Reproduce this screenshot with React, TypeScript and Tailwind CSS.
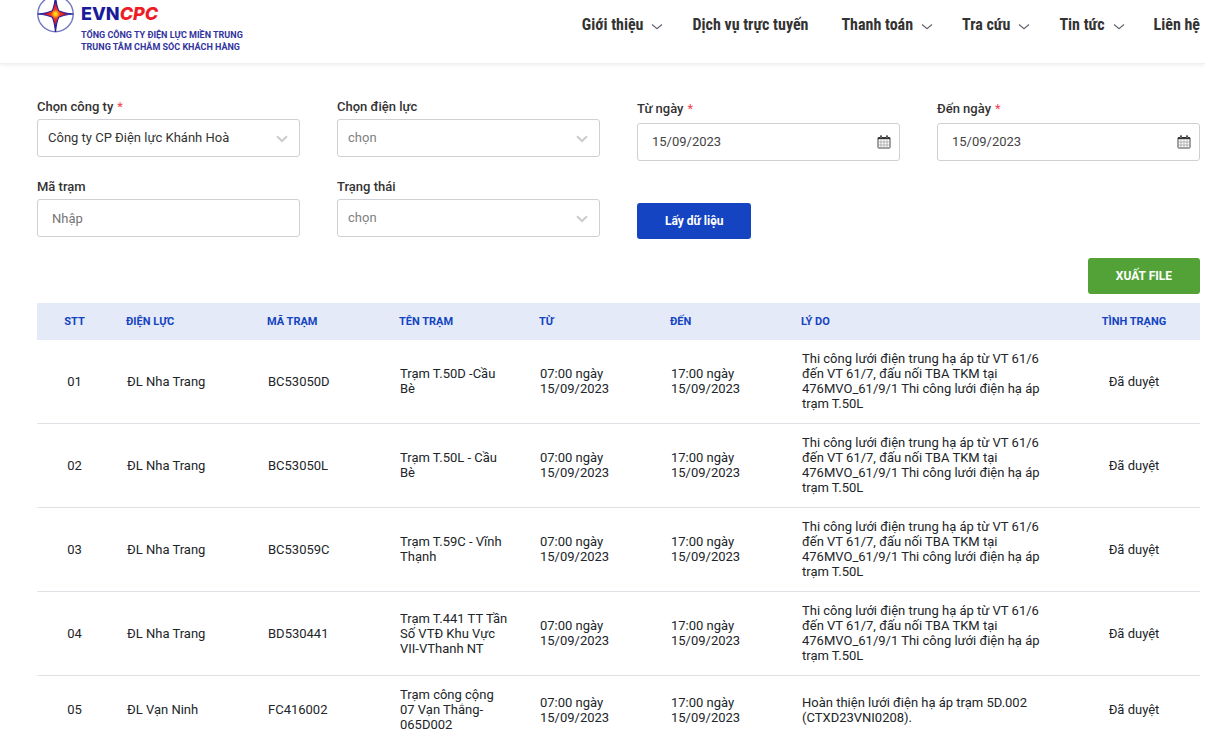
import type { ReactNode } from 'react';

const navItems = [
  { label: 'Giới thiệu', hasMenu: true },
  { label: 'Dịch vụ trực tuyến', hasMenu: false },
  { label: 'Thanh toán', hasMenu: true },
  { label: 'Tra cứu', hasMenu: true },
  { label: 'Tin tức', hasMenu: true },
  { label: 'Liên hệ', hasMenu: false },
];

const longReason =
  'Thi công lưới điện trung hạ áp từ VT 61/6 đến VT 61/7, đấu nối TBA TKM tại 476MVO_61/9/1 Thi công lưới điện hạ áp trạm T.50L';

const rows = [
  { stt: '01', unit: 'ĐL Nha Trang', code: 'BC53050D', name: 'Trạm T.50D -Cầu Bè', reason: longReason },
  { stt: '02', unit: 'ĐL Nha Trang', code: 'BC53050L', name: 'Trạm T.50L - Cầu Bè', reason: longReason },
  { stt: '03', unit: 'ĐL Nha Trang', code: 'BC53059C', name: 'Trạm T.59C - Vĩnh Thạnh', reason: longReason },
  { stt: '04', unit: 'ĐL Nha Trang', code: 'BD530441', name: 'Trạm T.441 TT Tần Số VTĐ Khu Vực VII-VThanh NT', reason: longReason },
  { stt: '05', unit: 'ĐL Vạn Ninh', code: 'FC416002', name: 'Trạm công cộng 07 Vạn Thắng-065D002', reason: 'Hoàn thiện lưới điện hạ áp trạm 5D.002 (CTXD23VNI0208).' },
];

export default function App() {
  return (
    <div className="w-full bg-white font-['Roboto',sans-serif] text-[13px] text-[#212529]">
      <Header />
      <main className="pt-[31px] pr-[5px] pl-[37px]">
        <form className="grid grid-cols-4 items-start gap-x-[37px] gap-y-3.5" onSubmit={(e) => e.preventDefault()}>
          <Field id="company" label="Chọn công ty" required>
            <SelectBox id="company" options={['Công ty CP Điện lực Khánh Hoà']} className="text-[#333]" />
          </Field>
          <Field id="unit" label="Chọn điện lực">
            <SelectBox id="unit" options={['chọn']} className="text-[#808080]" />
          </Field>
          <div className="pt-0.5">
            <DateField id="from" label="Từ ngày" />
          </div>
          <div className="pt-0.5">
            <DateField id="to" label="Đến ngày" />
          </div>
          <Field id="station" label="Mã trạm">
            <input
              id="station"
              type="text"
              placeholder="Nhập"
              className="h-[38px] w-full rounded-[3px] border border-[#ced0d4] px-3.5 placeholder:text-[#757575]"
            />
          </Field>
          <Field id="status" label="Trạng thái">
            <SelectBox id="status" options={['chọn']} className="text-[#808080]" />
          </Field>
          <div className="pt-7">
            <button type="submit" className="h-9 rounded-[3px] bg-[#1444c1] px-7 text-[12px] font-bold text-white">
              Lấy dữ liệu
            </button>
          </div>
        </form>

        <div className="mt-[19px] mb-[9px] flex justify-end">
          <button type="button" className="h-9 rounded-[3px] bg-[#53a238] px-7 text-[12px] font-bold text-white">
            XUẤT FILE
          </button>
        </div>

        <OutageTable />
      </main>
    </div>
  );
}

function Header() {
  return (
    <header className="flex h-16 items-start justify-between border-b border-[#f0f0f0] pr-[5px] pl-[37px] shadow-[0_1px_4px_rgba(0,0,0,0.08)]">
      <a href="#" className="flex text-[#1a1b9b]">
        <LogoMark />
        <span className="ml-[7px] flex flex-col pt-1">
          <span className="font-['Inter',sans-serif] text-[18px] leading-5 font-extrabold">
            EVN<i className="text-[#ee1c25]">CPC</i>
          </span>
          <span className="mt-[5px] text-[9px] leading-3 font-bold whitespace-nowrap text-[#33349f]">
            TỔNG CÔNG TY ĐIỆN LỰC MIỀN TRUNG
            <br />
            TRUNG TÂM CHĂM SÓC KHÁCH HÀNG
          </span>
        </span>
      </a>
      <nav className="flex gap-[33px] pt-[13px] font-['Roboto_Condensed','Liberation_Sans_Narrow',sans-serif] text-[16px] leading-6 font-bold text-[#333]">
        {navItems.map((item) => (
          <a key={item.label} href="#" className="flex items-center whitespace-nowrap">
            {item.label}
            {item.hasMenu && (
              <svg viewBox="0 0 12 8" className="mt-1 -mr-1 ml-2 h-2 w-3" fill="none" stroke="#666674" strokeWidth="1.2">
                <path d="M1 1.5 L6 5.8 L11 1.5" />
              </svg>
            )}
          </a>
        ))}
      </nav>
    </header>
  );
}

function LogoMark() {
  return (
    <svg viewBox="0 -5 37 38" className="-mt-[5px] h-[38px] w-[37px]">
      <defs>
        <radialGradient id="star" gradientUnits="userSpaceOnUse" cx="18.5" cy="14" r="17">
          <stop offset="0" stopColor="#fff200" />
          <stop offset="0.1" stopColor="#ffc21c" />
          <stop offset="0.26" stopColor="#f03a20" />
          <stop offset="0.5" stopColor="#d01a30" />
          <stop offset="0.75" stopColor="#26209a" />
        </radialGradient>
      </defs>
      <circle cx="18.5" cy="14" r="17.7" fill="#fff" stroke="#7476bd" strokeWidth="1.4" />
      <path
        d="M18.5 -4 Q19.6 6.5 21.8 10.7 Q26 12.9 36.5 14 Q26 15.1 21.8 17.3 Q19.6 21.5 18.5 32 Q17.4 21.5 15.2 17.3 Q11 15.1 .5 14 Q11 12.9 15.2 10.7 Q17.4 6.5 18.5 -4 Z"
        fill="url(#star)"
        stroke="#28219a"
        strokeWidth="1.1"
      />
    </svg>
  );
}

type FieldProps = { id: string; label: string; required?: boolean; children: ReactNode };

function Field({ id, label, required, children }: FieldProps) {
  return (
    <div>
      <label htmlFor={id} className="mt-0.5 mb-0.5 block leading-5 font-medium text-[#333]">
        {label}
        {required && <span className="ml-1 font-normal text-[#f0424d]">*</span>}
      </label>
      {children}
    </div>
  );
}

function SelectBox({ id, options, className }: { id: string; options: string[]; className: string }) {
  return (
    <div className="relative">
      <select id={id} className={`h-[38px] w-full appearance-none rounded-[3px] border border-[#ced0d4] bg-white px-2.5 ${className}`}>
        {options.map((option) => (
          <option key={option}>{option}</option>
        ))}
      </select>
      <svg
        viewBox="0 0 12 8"
        className="pointer-events-none absolute top-4 right-3 h-2 w-3"
        fill="none"
        stroke="#ccc"
        strokeWidth="2"
      >
        <path d="M1 1.2 L6 6 L11 1.2" />
      </svg>
    </div>
  );
}

function DateField({ id, label }: { id: string; label: string }) {
  return (
    <div>
      <label htmlFor={id} className="mt-0.5 mb-1 block leading-5 font-medium text-[#333]">
        {label}
        <span className="ml-1 font-normal text-[#f0424d]">*</span>
      </label>
      <div className="flex h-[38px] items-center rounded-[3px] border border-[#ced0d4] pr-2 pl-3.5">
        <input id={id} type="text" defaultValue="15/09/2023" className="min-w-0 flex-1 text-[#444]" />
        <button type="button" aria-label={label}>
          <CalendarIcon />
        </button>
      </div>
    </div>
  );
}

function CalendarIcon() {
  return (
    <svg viewBox="0 0 14 14" className="h-3.5 w-3.5" fill="none" stroke="#444">
      <rect x="1" y="2.5" width="12" height="10.5" rx="0.6" />
      <path d="M1 3.2 H13" stroke="#333" strokeWidth="2" />
      <path d="M4 0.6 V3.4 M10 0.6 V3.4" stroke="#333" strokeWidth="2" />
      <path d="M4 1.4 V3 M10 1.4 V3" stroke="#bbb" strokeWidth="0.8" />
      <path d="M4 4.5 V12.5 M7 4.5 V12.5 M10 4.5 V12.5 M1.5 7 H12.5 M1.5 10 H12.5" stroke="#999" strokeWidth="0.7" />
    </svg>
  );
}

function OutageTable() {
  return (
    <table className="w-full table-fixed text-left">
      <thead>
        <tr className="h-[37px] bg-[#e4eaf8] text-[11px] text-[#1444c1] [&>th]:pt-0.5 [&>th]:font-bold">
          <th className="w-[75px] text-center">STT</th>
          <th className="w-[141px] pl-3.5">ĐIỆN LỰC</th>
          <th className="w-[132px] pl-3.5">MÃ TRẠM</th>
          <th className="w-[140px] pl-3.5">TÊN TRẠM</th>
          <th className="w-[131px] pl-3.5">TỪ</th>
          <th className="w-[131px] pl-3.5">ĐẾN</th>
          <th className="pl-3.5">LÝ DO</th>
          <th className="w-[132px] text-center">TÌNH TRẠNG</th>
        </tr>
      </thead>
      <tbody>
        {rows.map((row) => (
          <tr key={row.stt} className="border-b border-[#dee2e6] leading-[15px] [&>td]:pt-[11px] [&>td]:pb-3">
            <td className="text-center">{row.stt}</td>
            <td className="pl-[15px]">{row.unit}</td>
            <td className="pl-[15px]">{row.code}</td>
            <td className="pr-3.5 pl-[15px]">{row.name}</td>
            <td className="pr-8 pl-[15px]">07:00 ngày 15/09/2023</td>
            <td className="pr-8 pl-[15px]">17:00 ngày 15/09/2023</td>
            <td className="pr-7 pl-[15px]">{row.reason}</td>
            <td className="text-center">Đã duyệt</td>
          </tr>
        ))}
      </tbody>
    </table>
  );
}
